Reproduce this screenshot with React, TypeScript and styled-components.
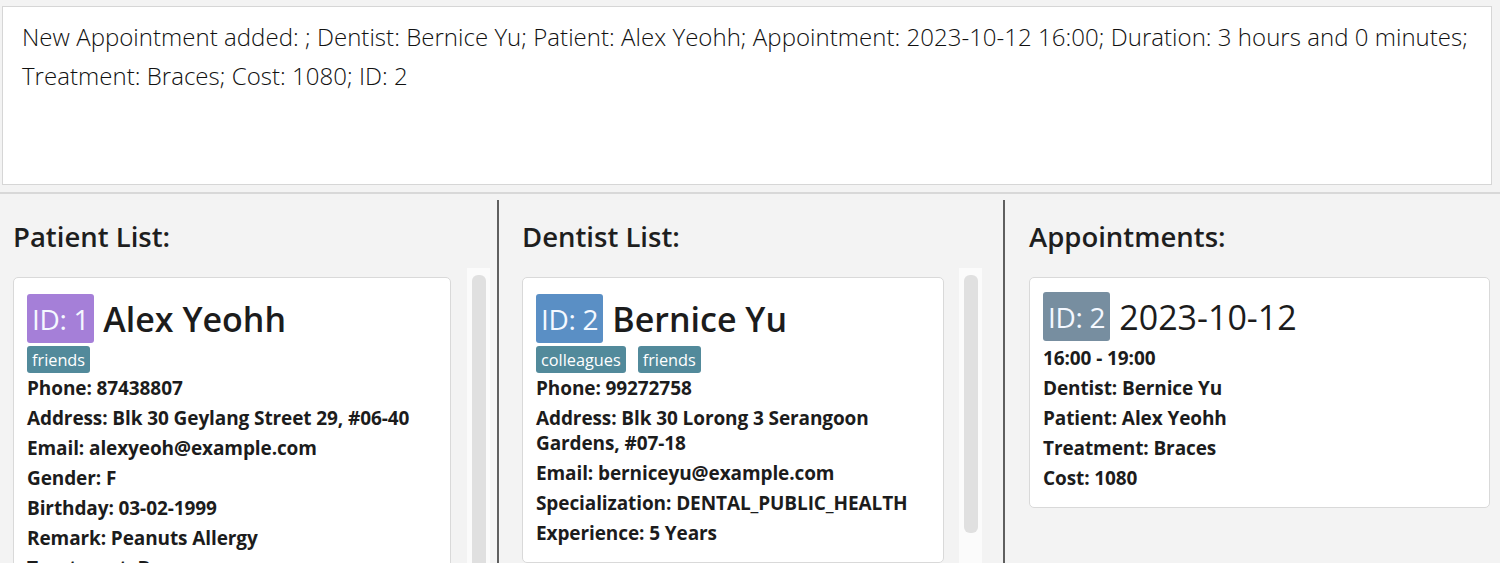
import React from "react";
import styled, { createGlobalStyle } from "styled-components";

const GlobalStyle = createGlobalStyle`
  html, body { margin: 0; padding: 0; }
  body {
    background: #f3f3f3;
    font-family: "Open Sans", "Noto Sans", sans-serif;
    color: #1c1c1c;
  }
  * { box-sizing: border-box; }
`;

const Page = styled.div`
  width: 1500px;
  height: 563px;
  overflow: hidden;
  display: flex;
  flex-direction: column;
  background: #f3f3f3;
`;

const ResultBox = styled.div`
  margin: 6px 8px 0 2px;
  height: 179px;
  flex: none;
  background: #ffffff;
  border: 1px solid #d6d6d6;
  padding: 10px 12px 10px 19px;
`;

const ResultText = styled.div`
  font-family: "Open Sans", sans-serif;
  font-weight: 300;
  font-size: 24px;
  line-height: 39px;
  letter-spacing: 0.03px;
  color: #111;
  white-space: nowrap;
`;

const Divider = styled.div`
  flex: none;
  height: 2px;
  margin: 7px 0 6px;
  background: #d8d8d8;
`;

const Columns = styled.div`
  flex: 1;
  min-height: 0;
  display: grid;
  grid-template-columns: 499px 506px 1fr;
`;

const Column = styled.section<{ $padL: number; $padR: number; $line?: boolean }>`
  min-height: 0;
  overflow: hidden;
  display: flex;
  flex-direction: column;
  padding: 0 ${(p) => p.$padR}px 0 ${(p) => p.$padL}px;
  border-right: ${(p) => (p.$line ? "2px solid #5f5f5f" : "none")};
`;

const Title = styled.h2`
  margin: 18px 0 12px;
  font-size: 27.5px;
  line-height: 38px;
  font-weight: 600;
  color: #1e1e1e;
  letter-spacing: 0;
`;

const ListRow = styled.div<{ $gap: number }>`
  flex: 1;
  min-height: 0;
  display: flex;
  gap: ${(p) => p.$gap}px;
`;

const CardList = styled.div`
  flex: 1;
  min-width: 0;
  padding-top: 9px;
`;

const ScrollTrack = styled.div`
  flex: none;
  width: 23px;
  background: #fbfbfb;
  padding: 7px 4px 0 5px;
`;

const ScrollThumb = styled.div<{ $h: number }>`
  height: ${(p) => p.$h}px;
  background: #e0e0e0;
  border-radius: 6px;
`;

const Card = styled.div<{ $padT: number }>`
  background: #ffffff;
  border: 1px solid #d9d9d9;
  border-radius: 5px;
  padding: ${(p) => p.$padT}px 13px 16px 13px;
  display: flex;
  flex-direction: column;
`;

const Header = styled.div`
  display: flex;
  align-items: center;
  gap: 9px;
  height: 49px;
`;

const IdBadge = styled.span<{ $bg: string }>`
  display: inline-flex;
  align-items: center;
  height: 49px;
  padding: 0 5px;
  border-radius: 3px;
  background: ${(p) => p.$bg};
  color: #f4f8ff;
  font-size: 28px;
  font-weight: 400;
  letter-spacing: -0.3px;
`;

const Name = styled.span<{ $weight: number }>`
  font-size: 34px;
  font-weight: ${(p) => p.$weight};
  color: #1c1c1c;
  letter-spacing: 0;
`;

const Tags = styled.div`
  display: flex;
  gap: 12px;
  margin-top: 3px;
`;

const Tag = styled.span`
  display: inline-flex;
  align-items: center;
  height: 27px;
  padding: 0 5px;
  border-radius: 3px;
  background: #528a9b;
  color: #ffffff;
  font-size: 16.3px;
  font-weight: 500;
`;

const Field = styled.div<{ $top?: number }>`
  margin-top: ${(p) => p.$top ?? 5}px;
  font-size: 19px;
  line-height: 25px;
  font-weight: 700;
  color: #1c1c1c;
  letter-spacing: -0.1px;
`;

export default function App() {
  return (
    <Page>
      <GlobalStyle />
      <ResultBox>
        <ResultText>
          New Appointment added: ; Dentist: Bernice Yu; Patient: Alex Yeohh; Appointment: 2023-10-12 16:00; Duration: 3 hours and 0 minutes;
          <br />
          Treatment: Braces; Cost: 1080; ID: 2
        </ResultText>
      </ResultBox>
      <Divider />
      <Columns>
        <Column $padL={13} $padR={7} $line>
          <Title>Patient List:</Title>
          <ListRow $gap={16}>
            <CardList>
              <Card $padT={16}>
                <Header>
                  <IdBadge $bg="#a57fd8">ID: 1</IdBadge>
                  <Name $weight={600}>Alex Yeohh</Name>
                </Header>
                <Tags>
                  <Tag>friends</Tag>
                </Tags>
                <Field $top={3}>Phone: 87438807</Field>
                <Field>Address: Blk 30 Geylang Street 29, #06-40</Field>
                <Field>Email: alexyeoh@example.com</Field>
                <Field>Gender: F</Field>
                <Field>Birthday: 03-02-1999</Field>
                <Field>Remark: Peanuts Allergy</Field>
                <Field>Treatment: Braces</Field>
              </Card>
            </CardList>
            <ScrollTrack>
              <ScrollThumb $h={400} />
            </ScrollTrack>
          </ListRow>
        </Column>
        <Column $padL={23} $padR={21} $line>
          <Title>Dentist List:</Title>
          <ListRow $gap={15}>
            <CardList>
              <Card $padT={16}>
                <Header>
                  <IdBadge $bg="#5a8fc5">ID: 2</IdBadge>
                  <Name $weight={600}>Bernice Yu</Name>
                </Header>
                <Tags>
                  <Tag>colleagues</Tag>
                  <Tag>friends</Tag>
                </Tags>
                <Field $top={3}>Phone: 99272758</Field>
                <Field>
                  Address: Blk 30 Lorong 3 Serangoon
                  <br />
                  Gardens, #07-18
                </Field>
                <Field>Email: berniceyu@example.com</Field>
                <Field>Specialization: DENTAL_PUBLIC_HEALTH</Field>
                <Field>Experience: 5 Years</Field>
              </Card>
            </CardList>
            <ScrollTrack>
              <ScrollThumb $h={258} />
            </ScrollTrack>
          </ListRow>
        </Column>
        <Column $padL={24} $padR={10}>
          <Title>Appointments:</Title>
          <ListRow $gap={0}>
            <CardList>
              <Card $padT={14}>
                <Header>
                  <IdBadge $bg="#778ea0">ID: 2</IdBadge>
                  <Name $weight={400}>2023-10-12</Name>
                </Header>
                <Field $top={5}>16:00 - 19:00</Field>
                <Field>Dentist: Bernice Yu</Field>
                <Field>Patient: Alex Yeohh</Field>
                <Field>Treatment: Braces</Field>
                <Field>Cost: 1080</Field>
              </Card>
            </CardList>
          </ListRow>
        </Column>
      </Columns>
    </Page>
  );
}
